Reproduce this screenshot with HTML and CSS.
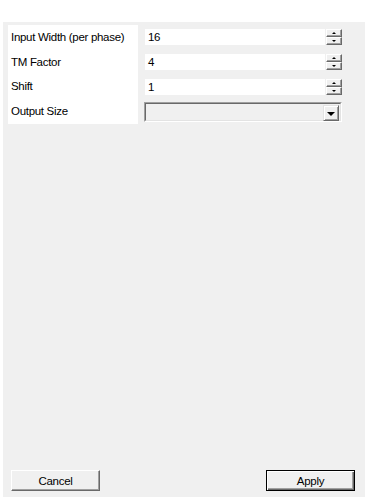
FILE: index.html
```html
<!DOCTYPE html>
<html>
<head>
<meta charset="utf-8">
<link rel="stylesheet" href="styles.css">
</head>
<body>
<div class="panel">
  <div class="form">
    <div class="labels">
      <div class="label">Input Width (per phase)</div>
      <div class="label">TM Factor</div>
      <div class="label">Shift</div>
      <div class="label">Output Size</div>
    </div>
    <div class="fields">
      <div class="row">
        <div class="text">16</div>
        <div class="spin"><span class="sb up"></span><span class="sb down"></span></div>
      </div>
      <div class="row">
        <div class="text">4</div>
        <div class="spin"><span class="sb up"></span><span class="sb down"></span></div>
      </div>
      <div class="row">
        <div class="text">1</div>
        <div class="spin"><span class="sb up"></span><span class="sb down"></span></div>
      </div>
      <div class="combo">
        <div class="combo-field"></div>
        <div class="combo-btn"><span class="tri"></span></div>
      </div>
    </div>
  </div>
  <div class="buttons">
    <button class="btn">Cancel</button>
    <button class="btn default">Apply</button>
  </div>
</div>
</body>
</html>
```
FILE: styles.css
```css
html, body {
  margin: 0;
  padding: 0;
  background: #ffffff;
  font-family: "Liberation Sans", Arial, sans-serif;
  font-size: 11.5px;
  letter-spacing: -0.3px;
  color: #000;
}
.panel {
  margin: 22px 0 0 3px;
  width: 362px;
  height: 475px;
  background: #f0f0f0;
  display: flex;
  flex-direction: column;
  justify-content: space-between;
}
.form {
  display: flex;
  padding: 3px 0 0 5px;
}
.labels {
  width: 130px;
  background: #ffffff;
  display: flex;
  flex-direction: column;
}
.label {
  height: 24.7px;
  line-height: 24.7px;
  padding-left: 3px;
  white-space: nowrap;
}
.fields {
  margin-left: 7px;
  padding-top: 4px;
  display: flex;
  flex-direction: column;
  gap: 9px;
}
.row {
  display: flex;
  height: 16px;
  gap: 1px;
}
.text {
  width: 180px;
  height: 16px;
  background: #ffffff;
  line-height: 17px;
  padding-left: 3px;
  box-sizing: border-box;
}
.spin {
  width: 16px;
  height: 16px;
  display: flex;
  flex-direction: column;
}
.sb {
  flex: 1;
  box-sizing: border-box;
  background: #f0f0f0;
  border-top: 1px solid #ffffff;
  border-left: 1px solid #ffffff;
  border-right: 1px solid #696969;
  border-bottom: 1px solid #696969;
  box-shadow: inset -1px -1px 0 #a0a0a0;
  display: flex;
  align-items: center;
  justify-content: center;
}
.sb::after {
  content: "";
  width: 0;
  height: 0;
  border-left: 2px solid transparent;
  border-right: 2px solid transparent;
}
.up::after {
  border-bottom: 2px solid #000;
}
.down::after {
  border-top: 2px solid #000;
}
.combo {
  position: relative;
  margin-top: -2px;
  margin-left: -1px;
  width: 198px;
  height: 20px;
  box-sizing: border-box;
  border-top: 1px solid #a0a0a0;
  border-left: 1px solid #a0a0a0;
  border-right: 1px solid #ffffff;
  border-bottom: 1px solid #ffffff;
  display: flex;
}
.combo-field {
  flex: 1;
  border-top: 1px solid #696969;
  border-left: 1px solid #696969;
  border-right: 1px solid #e3e3e3;
  border-bottom: 1px solid #e3e3e3;
  background: #f0f0f0;
}
.combo-btn {
  position: absolute;
  right: 2px;
  top: 2px;
  width: 16px;
  height: 16px;
  box-sizing: border-box;
  background: #f0f0f0;
  border-top: 1px solid #e3e3e3;
  border-left: 1px solid #e3e3e3;
  border-right: 1px solid #696969;
  border-bottom: 1px solid #696969;
  box-shadow: inset 1px 1px 0 #ffffff, inset -1px -1px 0 #a0a0a0;
  display: flex;
  align-items: center;
  justify-content: center;
}
.tri {
  width: 0;
  height: 0;
  border-left: 4px solid transparent;
  border-right: 4px solid transparent;
  border-top: 4px solid #000;
  margin-top: 1px;
}
.buttons {
  display: flex;
  justify-content: space-between;
  padding: 0 10px 6px 8px;
}
.btn {
  width: 89px;
  height: 21px;
  font-family: "Liberation Sans", Arial, sans-serif;
  font-size: 11.5px;
  letter-spacing: -0.3px;
  color: #000;
  background: #f0f0f0;
  padding: 0;
  box-sizing: border-box;
  border-top: 1px solid #ffffff;
  border-left: 1px solid #ffffff;
  border-right: 1px solid #696969;
  border-bottom: 1px solid #696969;
  box-shadow: inset -1px -1px 0 #a0a0a0;
}
.btn.default {
  border: 1px solid #000;
  box-shadow: inset 1px 1px 0 #ffffff, inset -1px -1px 0 #696969, inset -2px -2px 0 #a0a0a0;
}
```
